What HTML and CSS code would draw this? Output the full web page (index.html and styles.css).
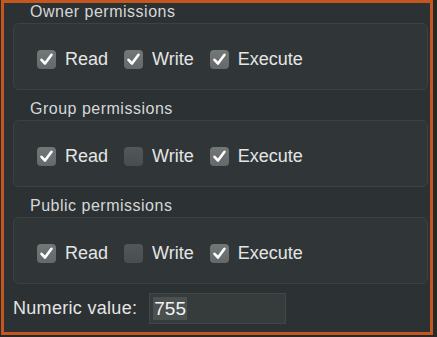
FILE: index.html
```html
<!DOCTYPE html>
<html>
<head>
<meta charset="utf-8">
<link rel="stylesheet" href="styles.css">
</head>
<body>
<div class="frame">
  <div class="section">
    <div class="title">Owner permissions</div>
    <div class="group">
      <label class="opt"><span class="box on"><svg viewBox="0 0 19 19"><path d="M4.5 9.8 L8 13.5 L14.5 4.8"/></svg></span><span class="lbl">Read</span></label>
      <label class="opt"><span class="box on"><svg viewBox="0 0 19 19"><path d="M4.5 9.8 L8 13.5 L14.5 4.8"/></svg></span><span class="lbl">Write</span></label>
      <label class="opt"><span class="box on"><svg viewBox="0 0 19 19"><path d="M4.5 9.8 L8 13.5 L14.5 4.8"/></svg></span><span class="lbl">Execute</span></label>
    </div>
  </div>
  <div class="section">
    <div class="title">Group permissions</div>
    <div class="group">
      <label class="opt"><span class="box on"><svg viewBox="0 0 19 19"><path d="M4.5 9.8 L8 13.5 L14.5 4.8"/></svg></span><span class="lbl">Read</span></label>
      <label class="opt"><span class="box off"></span><span class="lbl">Write</span></label>
      <label class="opt"><span class="box on"><svg viewBox="0 0 19 19"><path d="M4.5 9.8 L8 13.5 L14.5 4.8"/></svg></span><span class="lbl">Execute</span></label>
    </div>
  </div>
  <div class="section">
    <div class="title">Public permissions</div>
    <div class="group">
      <label class="opt"><span class="box on"><svg viewBox="0 0 19 19"><path d="M4.5 9.8 L8 13.5 L14.5 4.8"/></svg></span><span class="lbl">Read</span></label>
      <label class="opt"><span class="box off"></span><span class="lbl">Write</span></label>
      <label class="opt"><span class="box on"><svg viewBox="0 0 19 19"><path d="M4.5 9.8 L8 13.5 L14.5 4.8"/></svg></span><span class="lbl">Execute</span></label>
    </div>
  </div>
  <div class="numeric">
    <span class="num-label">Numeric value:</span>
    <div class="input"><span class="sel">755</span></div>
  </div>
</div>
</body>
</html>
```
FILE: styles.css
```css
html, body {
  margin: 0;
  padding: 0;
  background: #25292a;
  font-family: "Liberation Sans", Arial, sans-serif;
}
.frame {
  margin-left: 1px;
  width: 432px;
  height: 335px;
  box-sizing: border-box;
  border: 3px solid #c4571f;
  background: #2c3133;
  padding: 0 2px 0 9px;
}
.section {
  display: flex;
  flex-direction: column;
}
.section + .section {
  margin-top: 10px;
}
.title {
  font-size: 16px;
  line-height: 18px;
  color: #d6d8d8;
  padding-left: 17px;
  margin-bottom: 2px;
  letter-spacing: 0.5px;
}
.group {
  height: 67px;
  box-sizing: border-box;
  border: 1px solid #3c4243;
  border-radius: 6px;
  background: #303637;
  display: flex;
  align-items: center;
  padding: 5px 0 0 23px;
  gap: 16px;
}
.opt {
  display: flex;
  align-items: center;
  gap: 9px;
}
.box {
  width: 19px;
  height: 19px;
  border-radius: 4px;
  box-sizing: border-box;
  display: block;
}
.box.on {
  background: linear-gradient(#727778, #65696a);
}
.box.off {
  background: linear-gradient(#52585a, #484d4e);
}
.box svg {
  width: 19px;
  height: 19px;
  display: block;
}
.box path {
  fill: none;
  stroke: #ffffff;
  stroke-width: 2.6;
  stroke-linecap: round;
  stroke-linejoin: round;
}
.lbl {
  font-size: 18px;
  color: #e4e5e5;
  line-height: 22px;
}
.numeric {
  margin-top: 9px;
  display: flex;
  align-items: center;
  gap: 12px;
}
.num-label {
  font-size: 18px;
  color: #e4e5e5;
  letter-spacing: 0.3px;
}
.input {
  width: 137px;
  height: 31px;
  box-sizing: border-box;
  background: #363b3c;
  border: 1px solid #41474a;
  display: flex;
  align-items: center;
  padding-left: 3px;
}
.sel {
  background: #4a4f50;
  color: #f2f2f2;
  font-size: 19px;
  line-height: 23px;
  padding: 0 1px;
}
```
